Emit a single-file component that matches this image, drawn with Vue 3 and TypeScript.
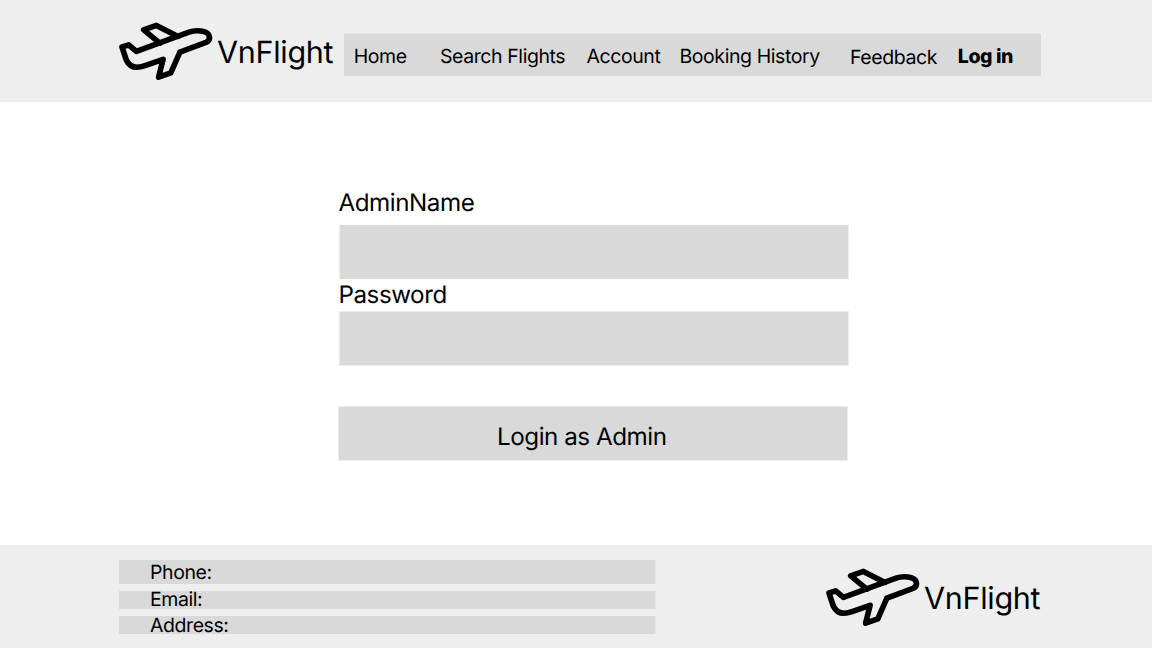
<script setup lang="ts">
interface NavItem {
  label: string
  key: string
}

const navItems: NavItem[] = [
  { label: 'Home', key: 'home' },
  { label: 'Search Flights', key: 'search' },
  { label: 'Account', key: 'account' },
  { label: 'Booking History', key: 'history' },
  { label: 'Feedback', key: 'feedback' },
  { label: 'Log in', key: 'login' },
]

const contacts: string[] = ['Phone:', 'Email:', 'Address:']

const planeBody =
  'M3 26 L9.7 23.8 L17.4 30.4 L70 11.1 C77 8.7 88 9.5 90 14.3 C91.1 17.5 90 20.1 87 21.4 L60.9 31.1 L51.8 51.9 L39.6 56.2 L44.1 38.3 L26 44.7 C17 47.9 10.5 45.9 7.3 39 Z'
const planeWing = 'M40.8 22.1 L24.7 8.9 L37.4 4.4 L59 15.4'
</script>

<template>
  <div class="page">
    <header class="header">
      <div class="brand">
        <svg class="plane" viewBox="0 0 94 60">
          <path :d="planeBody" />
          <path :d="planeWing" />
        </svg>
        <span class="brand-name">VnFlight</span>
      </div>
      <nav class="nav">
        <a v-for="item in navItems" :key="item.key" :class="['nav-link', item.key]">{{ item.label }}</a>
      </nav>
    </header>

    <main class="main">
      <form class="form" @submit.prevent>
        <label class="label" for="admin">AdminName</label>
        <input id="admin" class="field" type="text" />
        <label class="label second" for="password">Password</label>
        <input id="password" class="field soft" type="password" />
        <button class="submit" type="submit"><span>Login as Admin</span></button>
      </form>
    </main>

    <footer class="footer">
      <ul class="contacts">
        <li v-for="contact in contacts" :key="contact">{{ contact }}</li>
      </ul>
      <div class="brand">
        <svg class="plane" viewBox="0 0 94 60">
          <path :d="planeBody" />
          <path :d="planeWing" />
        </svg>
        <span class="brand-name">VnFlight</span>
      </div>
    </footer>
  </div>
</template>

<style>
body {
  background: #fff;
}
</style>

<style scoped>
.page {
  width: 1152px;
  height: 648px;
  display: flex;
  flex-direction: column;
  font-family: Inter, 'Liberation Sans', sans-serif;
  text-rendering: geometricPrecision;
  color: #000;
}
.header {
  flex: none;
  box-sizing: border-box;
  height: 102px;
  padding-left: 119px;
  display: flex;
  background: #eee;
}
.brand {
  display: flex;
  flex: none;
  width: 225px;
  height: 60px;
  margin-top: 21px;
}
.plane {
  flex: none;
  width: 94px;
  height: 60px;
  fill: none;
  stroke: #000;
  stroke-width: 5.6;
  stroke-linejoin: round;
  stroke-linecap: round;
}
.brand-name {
  margin-left: 4px;
  font-size: 30.5px;
  letter-spacing: -0.28px;
  line-height: 63px;
  font-weight: 370;
  white-space: nowrap;
}
.nav {
  box-sizing: border-box;
  width: 697px;
  height: 43px;
  margin-top: 33px;
  padding-left: 9.7px;
  display: grid;
  grid-template-columns: 86.3px 146.5px 93px 170.5px 107.8px 80px;
  background: #d9d9d9;
  border-top: 1px solid #e5e5e5;
}
.nav-link {
  font-size: 19.5px;
  font-weight: 380;
  letter-spacing: -0.42px;
  line-height: 44px;
  white-space: nowrap;
}
.feedback {
  padding-top: 1px;
}
.login {
  font-weight: 800;
}
.main {
  flex: none;
  height: 443px;
}
.form {
  width: 510px;
  margin-left: 338px;
  padding-top: 83px;
  display: flex;
  flex-direction: column;
}
.label {
  height: 40px;
  padding-left: 0.5px;
  font-size: 24.2px;
  font-weight: 380;
  letter-spacing: -0.46px;
  line-height: 35px;
}
.label.second {
  height: 32px;
  line-height: 31px;
}
.field {
  box-sizing: border-box;
  width: 510px;
  height: 54px;
  margin: 0 0 0 1px;
  padding: 0 12px;
  border: 0 solid #ececec;
  border-left-width: 1px;
  border-right-width: 1px;
  border-radius: 0;
  background: #d9d9d9;
  outline: none;
}
.field.soft {
  height: 55px;
  border-top-width: 1px;
  border-bottom-width: 1px;
}
.submit {
  box-sizing: border-box;
  width: 510px;
  height: 55px;
  margin: 40px 0 0;
  padding: 6px 0 0 158px;
  border: 1px solid #ececec;
  background: #d9d9d9;
  color: #000;
  font: 380 24.2px Inter, sans-serif;
  letter-spacing: -0.46px;
  text-rendering: inherit;
  text-align: left;
}
.footer {
  flex: none;
  height: 103px;
  display: flex;
  justify-content: space-between;
  background: #eee;
  padding-left: 119px;
  padding-right: 101px;
}
.footer .brand {
  margin-top: 22px;
}
.contacts {
  list-style: none;
  width: 537px;
  margin: 15px 0 0;
  padding: 0;
}
.contacts li {
  box-sizing: border-box;
  height: 18px;
  padding-left: 31px;
  margin-bottom: 7px;
  border-right: 1px solid #e5e5e5;
  background: #d9d9d9;
  font-size: 19.5px;
  font-weight: 380;
  letter-spacing: -0.42px;
  line-height: 17px;
}
.contacts li:first-child {
  height: 24px;
  line-height: 24px;
}
.contacts li:last-child {
  line-height: 19px;
}
</style>
